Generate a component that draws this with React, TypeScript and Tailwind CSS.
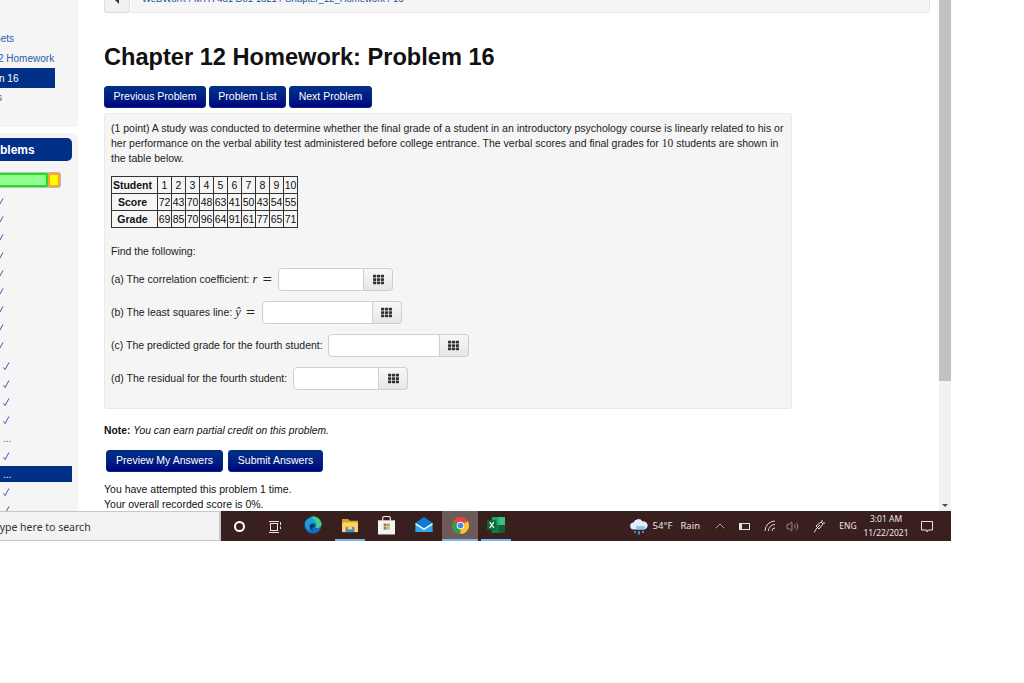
import { ChevronUp, Volume2 } from "lucide-react";
import { FaTh } from "react-icons/fa";

const sideMarks = [
  { mark: "check", inset: "-ml-[3px]", gap: "" },
  { mark: "check", inset: "-ml-[3px]", gap: "" },
  { mark: "check", inset: "-ml-[3px]", gap: "" },
  { mark: "check", inset: "-ml-[3px]", gap: "" },
  { mark: "check", inset: "-ml-[3px]", gap: "" },
  { mark: "check", inset: "-ml-[3px]", gap: "" },
  { mark: "check", inset: "-ml-[3px]", gap: "" },
  { mark: "check", inset: "-ml-[3px]", gap: "" },
  { mark: "check", inset: "-ml-[3px]", gap: "mb-[2px]" },
  { mark: "check", inset: "pl-[3px]", gap: "" },
  { mark: "check", inset: "pl-[3px]", gap: "" },
  { mark: "check", inset: "pl-[3px]", gap: "" },
  { mark: "check", inset: "pl-[3px]", gap: "" },
  { mark: "dots", inset: "pl-[3px]", gap: "" },
  { mark: "check", inset: "pl-[3px]", gap: "" },
  { mark: "active", inset: "pl-[3px]", gap: "" },
  { mark: "check", inset: "pl-[3px]", gap: "" },
  { mark: "check", inset: "pl-[3px]", gap: "" },
];

const students = ["1", "2", "3", "4", "5", "6", "7", "8", "9", "10"];
const scores = ["72", "43", "70", "48", "63", "41", "50", "43", "54", "55"];
const grades = ["69", "85", "70", "96", "64", "91", "61", "77", "65", "71"];

const CheckMark = () => (
  <svg width="7" height="9" viewBox="0 0 7 9" fill="none">
    <path d="M0.5 5.5 L2 7.5 L6 0.5" stroke="#2f5bb0" strokeWidth="1" />
  </svg>
);

const NavButton = ({ label, className }: { label: string; className: string }) => (
  <div
    className={`h-[22px] flex items-center justify-center rounded-[3px] text-white text-[10.5px] bg-gradient-to-b from-[#003087] to-[#000080] border border-[#002a80] ${className}`}
  >
    {label}
  </div>
);

const AnswerInput = ({ width }: { width: string }) => (
  <div className="flex h-[23px]">
    <div className={`${width} bg-white border border-[#cfcfcf] rounded-l-[4px]`} />
    <div className="w-[29px] flex items-center justify-center bg-gradient-to-b from-[#f8f8f8] to-[#e6e6e6] border border-l-0 border-[#cfcfcf] rounded-r-[4px]">
      <FaTh size={11} className="text-[#333333]" />
    </div>
  </div>
);

const Sidebar = () => (
  <div className="w-[78px] shrink-0 flex flex-col overflow-hidden">
    <div className="h-[127px] bg-[#f5f5f5] text-[10px] text-[#2a5db0] overflow-hidden">
      <div className="h-[28px]" />
      <div className="h-[20px] flex items-center -ml-[6px]">
        <span>Sets</span>
      </div>
      <div className="h-[20px] flex items-center whitespace-nowrap -ml-[2px]">
        <span>2 Homework</span>
      </div>
      <div className="w-[56px] h-[20px] bg-[#003087] text-white flex items-center -ml-px whitespace-nowrap">
        <span>n 16</span>
      </div>
      <div className="h-[19px] flex items-center -ml-[3px]">
        <span>s</span>
      </div>
    </div>
    <div className="h-[6px] bg-white" />
    <div className="flex-1 bg-[#f5f5f5] rounded-tr-[6px] overflow-hidden pt-[5px]">
      <div className="w-[72px] h-[23px] bg-[#003087] rounded-r-[5px] flex items-center text-white text-[12px] font-bold">
        blems
      </div>
      <div className="w-[61px] h-[16px] mt-[11px] flex items-stretch rounded-r-[3px] bg-[#bbbbbb] py-px pr-px">
        <div className="w-[48px] bg-[#90ff90] border-2 border-l-0 border-[#22dd22] rounded-r-[2px]" />
        <div className="flex-1 bg-[#ffff00] border-2 border-[#ffa030] rounded-[3px]" />
      </div>
      <div className="mt-[5px] flex flex-col">
        {sideMarks.map((item, i) =>
          item.mark === "active" ? (
            <div key={i} className="h-[16px] my-px w-[72px] flex items-center text-[10px] bg-[#003087] text-white pl-[3px]">
              ...
            </div>
          ) : (
            <div key={i} className={`h-[18px] flex items-center text-[10px] text-[#2f5bb0] ${item.inset} ${item.gap}`}>
              {item.mark === "check" ? <CheckMark /> : "..."}
            </div>
          ),
        )}
      </div>
    </div>
  </div>
);

const ScoreTable = () => (
  <table className="mt-[10px] w-[186px] table-fixed border-collapse border border-[#333333] text-[10.5px] text-[#111111] leading-none">
    <tbody>
      {[
        { label: "Student", cells: students },
        { label: "Score", cells: scores },
        { label: "Grade", cells: grades },
      ].map((row) => (
        <tr key={row.label} className="h-[17px]">
          <td className="w-[46px] p-0 pr-[4px] border border-[#333333] font-bold text-center">{row.label}</td>
          {row.cells.map((cell, i) => (
            <td key={i} className="w-[14px] p-0 border border-[#333333] text-center">
              {cell}
            </td>
          ))}
        </tr>
      ))}
    </tbody>
  </table>
);

const MathSym = ({ children }: { children: string }) => (
  <span className="font-['Liberation_Serif',serif] italic text-[12.5px]">{children}</span>
);

const MathEq = () => <span className="font-['DejaVu_Serif',serif] text-[12px] ml-[2px]">=</span>;

const Problem = () => (
  <div className="w-[688px] h-[296px] mt-[5px] bg-[#f5f5f5] border border-[#e9e9e9] rounded-[3px] pl-[6px] pr-[2px] pt-[7px] text-[10.5px] leading-[15px] text-[#222222]">
    <p>
      (1 point) A study was conducted to determine whether the final grade of a student in an introductory psychology
      course is linearly related to his or her performance on the verbal ability test administered before college
      entrance. The verbal scores and final grades for{" "}
      <span className="font-['Liberation_Serif',serif] text-[11.5px]">10</span> students are shown in the table below.
    </p>
    <ScoreTable />
    <p className="mt-[16px]">Find the following:</p>
    <div className="mt-[9px] flex flex-col gap-[10px]">
      <div className="flex items-center h-[23px] gap-[6px]">
        <span>
          (a) The correlation coefficient: <MathSym>r</MathSym> <MathEq />
        </span>
        <AnswerInput width="w-[86px]" />
      </div>
      <div className="flex items-center h-[23px] gap-[6px]">
        <span>
          (b) The least squares line: <MathSym>ŷ</MathSym> <MathEq />
        </span>
        <AnswerInput width="w-[111px]" />
      </div>
      <div className="flex items-center h-[23px] gap-[5px]">
        <span>(c) The predicted grade for the fourth student:</span>
        <AnswerInput width="w-[112px]" />
      </div>
      <div className="flex items-center h-[23px] gap-[6px]">
        <span>(d) The residual for the fourth student:</span>
        <AnswerInput width="w-[86px]" />
      </div>
    </div>
  </div>
);

const Content = () => (
  <div className="flex-1 pl-[26px] overflow-hidden text-[#111111]">
    <div className="w-[826px] h-[13px] flex gap-px">
      <div className="w-[26px] h-[13px] bg-[#f1f1f1] border border-t-0 border-[#dddddd] rounded-b-[3px] flex justify-center">
        <svg width="5" height="4" viewBox="0 0 5 4" className="fill-[#333333]">
          <path d="M0 0 H4 V4 Z" />
        </svg>
      </div>
      <div className="flex-1 bg-[#f5f5f5] border-b border-r border-[#e6e6e6] rounded-br-[3px] overflow-hidden pl-[11px]">
        <div className="text-[9.5px] text-[#1f4fa0] leading-[10px] -mt-[6px] whitespace-nowrap">
          WeBWorK / MTH 481 D01 1821 / Chapter_12_Homework / 16
        </div>
      </div>
    </div>
    <h1 className="mt-[30px] h-[28px] text-[23.6px] leading-[28px] font-bold text-[#111111] whitespace-nowrap">
      Chapter 12 Homework: Problem 16
    </h1>
    <div className="mt-[15px] flex gap-[3px]">
      <NavButton label="Previous Problem" className="w-[102px]" />
      <NavButton label="Problem List" className="w-[77px]" />
      <NavButton label="Next Problem" className="w-[83px]" />
    </div>
    <Problem />
    <p className="mt-[14px] text-[10.3px] leading-[15px]">
      <span className="font-bold">Note: </span>
      <span className="italic">You can earn partial credit on this problem.</span>
    </p>
    <div className="mt-[12px] ml-[2px] flex gap-[5px]">
      <NavButton label="Preview My Answers" className="w-[117px]" />
      <NavButton label="Submit Answers" className="w-[95px]" />
    </div>
    <p className="mt-[10px] text-[10.5px] leading-[15px]">You have attempted this problem 1 time.</p>
    <p className="text-[10.5px] leading-[15px]">Your overall recorded score is 0%.</p>
  </div>
);

const Scrollbar = () => (
  <div className="w-[12px] shrink-0 flex flex-col bg-[#f1f1f1]">
    <div className="h-[381px] bg-[#c1c1c1]" />
    <div className="flex-1" />
    <div className="h-[12px] flex items-center justify-center">
      <div className="w-0 h-0 border-x-[3px] border-x-transparent border-t-[3px] border-t-[#505050]" />
    </div>
  </div>
);

const EdgeIcon = () => (
  <svg width="18" height="18" viewBox="0 0 20 20">
    <circle cx="10" cy="10" r="9.5" fill="#0f6fc6" />
    <path d="M1 9 C2 1 15 -2 19 7 C20.5 12 16 14 13 13 C15 10 12 7 8.5 8 C5 9 4.5 13 7 16 C4 16 1 13 1 9 Z" fill="#1f9fd8" />
    <path d="M8 1 C13 -0.5 18 2.5 19.3 8 C20 12 16 14 13 13 C15 9.5 13 4 8 1 Z" fill="#3fd08a" />
    <path d="M7 10 C9 8 12 9 12.5 11.5 C10 12 8.5 14 10 17 C7.5 15.5 6 12.5 7 10 Z" fill="#12306a" />
  </svg>
);

const FolderIcon = () => (
  <svg width="16" height="15" viewBox="0 0 18 17">
    <path d="M0 1 H7 L9 3 H18 V16 H0 Z" fill="#d9a02c" />
    <path d="M0 5 H18 V16 H0 Z" fill="#ffd35c" />
    <rect x="4" y="10" width="10" height="6" fill="#3b8fd0" />
    <rect x="6.5" y="10" width="5" height="3" fill="#ffd35c" />
  </svg>
);

const StoreIcon = () => (
  <svg width="17" height="19" viewBox="0 0 18 20">
    <path d="M5 5 V2 Q5 0.5 7 0.5 H11 Q13 0.5 13 2 V5" fill="none" stroke="#f1f1f1" strokeWidth="1.2" />
    <rect x="0" y="4.5" width="18" height="15" fill="#f4f4f4" />
    <rect x="6" y="8" width="3" height="3" fill="#e8502a" />
    <rect x="9.5" y="8" width="3" height="3" fill="#7cbb2a" />
    <rect x="6" y="11.5" width="3" height="3" fill="#2a9fe0" />
    <rect x="9.5" y="11.5" width="3" height="3" fill="#fbb817" />
  </svg>
);

const MailIcon = () => (
  <svg width="18" height="16" viewBox="0 0 18 17">
    <path d="M0 6 L9 0 L18 6 V16 H0 Z" fill="#0f7ad6" />
    <path d="M0 6.5 L9 12 L18 6.5 V8.5 L9 14 L0 8.5 Z" fill="#ffffff" />
    <path d="M0 8.5 L9 14 L18 8.5 V16 H0 Z" fill="#2fa6ee" />
  </svg>
);

const ChromeIcon = () => (
  <svg width="17" height="17" viewBox="0 0 18 18">
    <circle cx="9" cy="9" r="9" fill="#e2483b" />
    <path d="M9 9 L1.2 4.5 A9 9 0 0 0 9 18 Z" fill="#2f9e4f" />
    <path d="M9 9 L9 18 A9 9 0 0 0 16.8 4.5 Z" fill="#f8c52c" />
    <circle cx="9" cy="9" r="4" fill="#ffffff" />
    <circle cx="9" cy="9" r="3" fill="#4a84e8" />
  </svg>
);

const ExcelIcon = () => (
  <svg width="18" height="16" viewBox="0 0 19 17">
    <rect x="5" y="0" width="14" height="17" rx="1" fill="#21a366" />
    <rect x="12" y="0" width="7" height="8.5" fill="#33c481" />
    <rect x="5" y="8.5" width="7" height="8.5" fill="#107c41" />
    <rect x="12" y="8.5" width="7" height="8.5" fill="#185c37" />
    <rect x="0" y="3.5" width="10" height="10" rx="1" fill="#0e6b3a" />
    <path d="M2.8 5.5 L7.2 11.5 M7.2 5.5 L2.8 11.5" stroke="#ffffff" strokeWidth="1.2" />
  </svg>
);

const WeatherIcon = () => (
  <svg width="18" height="18" viewBox="0 0 18 18">
    <path d="M4 11.5 A3.5 3.5 0 0 1 3.5 4.5 A5 5 0 0 1 12.5 3.5 A4 4 0 0 1 14.5 11.5 Z" fill="#e4eef8" />
    <path d="M6 8 H15 Q16 10.5 14.5 11.5 H6 Z" fill="#8fc4ee" />
    <path d="M5 13 V15 M9 13 V16.5 M13 13 V15" stroke="#5aa5ea" strokeWidth="1.6" />
  </svg>
);

const taskIcons = [
  { id: "edge", Icon: EdgeIcon, w: "w-[37px]", bar: "" },
  { id: "folder", Icon: FolderIcon, w: "w-[37px]", bar: "w-[30px] bg-[#7cb6e8]" },
  { id: "store", Icon: StoreIcon, w: "w-[37px]", bar: "" },
  { id: "mail", Icon: MailIcon, w: "w-[37px]", bar: "" },
  { id: "chrome", Icon: ChromeIcon, w: "w-[36px]", bar: "w-full bg-[#7cb6e8]", open: true },
  { id: "excel", Icon: ExcelIcon, w: "w-[36px]", bar: "w-[30px] bg-[#7cb6e8]" },
];

const Taskbar = () => (
  <div className="h-[30px] flex font-['Noto_Sans',sans-serif]">
    <div className="w-[221px] shrink-0 bg-[#f2f2f2] border-t border-b border-r-2 border-[#c8c8c8] flex items-center overflow-hidden pt-[3px]">
      <span className="-ml-[6px] text-[10.5px] text-[#333333] whitespace-nowrap">Type here to search</span>
    </div>
    <div className="flex-1 bg-[#3a1f1f] flex items-stretch text-[#e8e4e4]">
      <div className="w-[36px] flex items-center justify-center pt-px">
        <div className="w-[11px] h-[11px] rounded-full border-2 border-white" />
      </div>
      <div className="w-[37px] flex items-center justify-center pt-px">
        <svg width="13" height="12" viewBox="0 0 13 12" fill="none" stroke="#e8e4e4" strokeWidth="1">
          <rect x="1.5" y="2.5" width="7" height="7" />
          <path d="M0 0.5 H10 M0 11.5 H10 M11.5 1 V4 M11.5 5.5 V8" />
        </svg>
      </div>
      {taskIcons.map(({ id, Icon, w, bar, open }) => (
        <div key={id} className={`${w} flex flex-col items-center ${open ? "bg-[#6e5a58]" : ""}`}>
          <div className="flex-1 flex items-center justify-center">
            <Icon />
          </div>
          <div className={`h-[2px] ${bar}`} />
        </div>
      ))}
      <div className="flex-1" />
      <div className="flex items-center text-[9.5px] pt-px">
        <WeatherIcon />
        <span className="ml-[5px] whitespace-nowrap">54°F</span>
        <span className="ml-[8px]">Rain</span>
      </div>
      <div className="ml-[9px] w-[22px] flex items-center justify-center">
        <ChevronUp size={16} strokeWidth={1} />
      </div>
      <div className="w-[26px] flex items-center justify-center">
        <div className="w-[11px] h-[7px] border border-[#e8e4e4] border-l-[3px]" />
      </div>
      <div className="w-[26px] flex items-center justify-center">
        <svg width="12" height="12" viewBox="0 0 12 12" fill="none" stroke="#d8d4d4" strokeWidth="1">
          <path d="M11 1 A10 10 0 0 0 1 11 M11 4.5 A6.5 6.5 0 0 0 4.5 11 M11 8 A3 3 0 0 0 8 11" />
        </svg>
      </div>
      <div className="w-[18px] flex items-center justify-center">
        <Volume2 size={13} strokeWidth={1} />
      </div>
      <div className="w-[36px] flex items-center justify-center">
        <svg width="13" height="14" viewBox="0 0 13 14" fill="none" stroke="#e8e4e4" strokeWidth="1">
          <path d="M1 13 C3 13 2 10 4 9 M3 7 L6 10 L10 5 L8 3 Z M9 1 V3 M12 4 H10 M5 8 L7 6" />
        </svg>
      </div>
      <div className="w-[22px] flex items-center justify-center text-[8.5px]">ENG</div>
      <div className="w-[54px] flex flex-col items-center justify-center text-[8.5px] leading-[14px]">
        <span>3:01 AM</span>
        <span>11/22/2021</span>
      </div>
      <div className="w-[28px] flex items-center justify-center">
        <svg width="12" height="13" viewBox="0 0 12 13" fill="none" stroke="#e8e4e4" strokeWidth="1">
          <path d="M0.5 1.5 H11.5 V10 H7.5 L6 12 V10 H0.5 Z" />
        </svg>
      </div>
      <div className="w-[10px]" />
    </div>
  </div>
);

export default function App() {
  return (
    <div className="w-[1024px] h-[683px] bg-white overflow-hidden font-['Liberation_Sans',Arial,sans-serif]">
      <div className="w-[951px]">
        <div className="h-[511px] flex overflow-hidden">
          <Sidebar />
          <Content />
          <Scrollbar />
        </div>
        <Taskbar />
      </div>
    </div>
  );
}
